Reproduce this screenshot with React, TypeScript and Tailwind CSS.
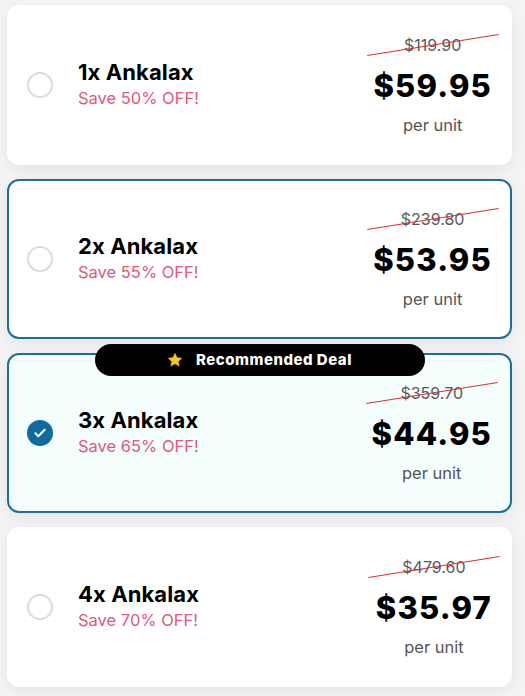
import React from "react";

type Deal = {
  qty: number;
  save: number;
  was: string;
  price: string;
  selected?: boolean;
  bordered?: boolean;
  badge?: boolean;
};

const deals: Deal[] = [
  { qty: 1, save: 50, was: "$119.90", price: "$59.95" },
  { qty: 2, save: 55, was: "$239.80", price: "$53.95", bordered: true },
  { qty: 3, save: 65, was: "$359.70", price: "$44.95", selected: true, bordered: true, badge: true },
  { qty: 4, save: 70, was: "$479.60", price: "$35.97" },
];

function Radio({ checked }: { checked?: boolean }) {
  if (checked) {
    return (
      <div className="w-[26px] h-[26px] rounded-full bg-[#0f6b9e] flex items-center justify-center shrink-0">
        <svg width="14" height="14" viewBox="0 0 24 24" fill="none">
          <path
            d="M4 12.5l5 5L20 6.5"
            stroke="#fff"
            strokeWidth="3.4"
            strokeLinecap="round"
            strokeLinejoin="round"
          />
        </svg>
      </div>
    );
  }
  return (
    <div className="w-[26px] h-[26px] rounded-full border-2 border-[#dcdcdc] bg-white shrink-0" />
  );
}

function Star() {
  return (
    <svg width="16" height="16" viewBox="0 0 24 24">
      <path
        d="M12 1.8l3.1 6.6 7.1.9-5.2 4.9 1.4 7.1L12 17.8l-6.4 3.5 1.4-7.1-5.2-4.9 7.1-.9z"
        fill="#f7c62f"
        stroke="#e8a91c"
        strokeWidth="0.8"
        strokeLinejoin="round"
      />
    </svg>
  );
}

function DealCard({ d }: { d: Deal }) {
  return (
    <div
      className={[
        "relative h-[160px] rounded-[12px] flex items-center pl-[18px] pr-[18px] border-2",
        d.bordered ? "border-[#1d6f97]" : "border-transparent",
        d.selected ? "bg-[#f3fefd]" : "bg-white",
        "shadow-[0_4px_16px_rgba(0,0,0,0.07)]",
      ].join(" ")}
    >
      {d.badge ? (
        <div className="absolute -top-[11px] left-1/2 -translate-x-1/2 w-[330px] h-[32px] rounded-full bg-black flex items-center justify-center gap-[13px]">
          <Star />
          <span className="text-white text-[15px] font-extrabold tracking-[0.5px]">
            Recommended Deal
          </span>
        </div>
      ) : null}

      <Radio checked={d.selected} />

      <div className="ml-[25px] flex-1 min-w-0 -mt-[3px]">
        <p className="text-[22px] leading-[26px] font-bold text-black tracking-[0.1px]">
          {d.qty}x Ankalax
        </p>
        <p className="text-[16.5px] leading-[20px] text-[#e0587b] mt-[3px]">
          Save {d.save}% OFF!
        </p>
      </div>

      <div className="flex flex-col items-center shrink-0 pt-[2px]">
        <div className="relative -mt-[4px]">
          <span className="text-[16px] leading-[20px] text-[#585858]">{d.was}</span>
          <div className="absolute left-1/2 top-1/2 w-[133px] h-[1px] bg-[#dc3038] -translate-x-1/2 -translate-y-1/2 -rotate-[9deg]" />
        </div>
        <span className="text-[31px] leading-[42px] font-extrabold text-black mt-[8px] tracking-[1.2px]">
          {d.price}
        </span>
        <span className="text-[16.5px] leading-[20px] text-[#555] mt-[8px]">per unit</span>
      </div>
    </div>
  );
}

export default function App() {
  return (
    <div
      className="min-h-screen bg-[#f4f4f4] pl-[7px] pr-[13px] pt-[5px] pb-[8px] flex flex-col gap-[14px]"
      style={{ fontFamily: "Inter, 'Noto Sans', sans-serif" }}
    >
      {deals.map((d) => (
        <DealCard key={d.qty} d={d} />
      ))}
    </div>
  );
}
